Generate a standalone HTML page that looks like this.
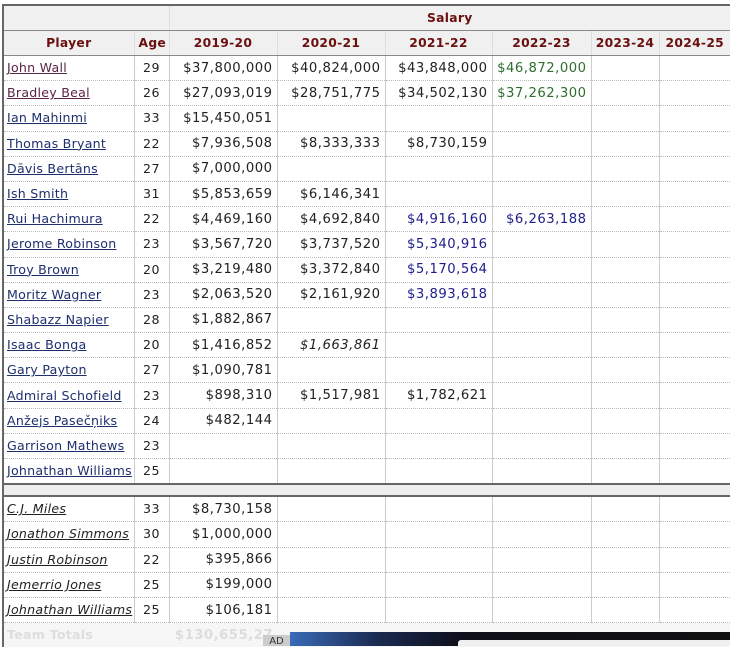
<!DOCTYPE html><html><head><style>
body{margin:0;width:730px;height:646px;overflow:hidden;background:#fff;font-family:"DejaVu Sans",Verdana,sans-serif;font-size:12.3px;color:#222;position:relative}
table{position:absolute;left:2px;top:4px;border-collapse:collapse;table-layout:fixed;width:727px;border-top:2px solid #666;border-left:2px solid #666}
td,th{height:23.2px;padding:1px 4px 0 4px;white-space:nowrap;border-left:1px solid #ccc;border-bottom:1px dotted #bbb;text-align:right;font-size:13.2px;letter-spacing:0.5px;line-height:16px}
th{height:24px;padding:0 4px;background:#f0f0f0;color:#6b0f0f;font-weight:bold;text-align:center;border-bottom:1px solid #888;border-left:1px solid #ddd;letter-spacing:0.3px;font-size:12.3px}
td.n{text-align:left;padding:0 0 0 3px;height:24.2px;letter-spacing:0.25px;font-size:12.6px}
td.n a{color:#1e2f6e;text-decoration:underline}
td.v a{color:#5a2446}
td.a{text-align:center;letter-spacing:0.5px;font-size:12.6px;padding:0;height:24.2px}
.g{color:#2e6e2e}.b{color:#1e1e8a}.i{font-style:italic}
tr.sep td{height:10px;background:#eee;border-top:2px solid #666;border-bottom:2px solid #666;padding:0}
tr.dd td.n a{font-style:italic;color:#222}
tr.tot td{color:#ddd;font-weight:bold;border:none;background:#f6f6f6}
</style></head><body>
<table>
<colgroup><col style="width:131px"><col style="width:35px"><col style="width:108px"><col style="width:108px"><col style="width:107px"><col style="width:99px"><col style="width:68px"><col style="width:71px"></colgroup>
<tr><th colspan="2"></th><th colspan="6">Salary</th></tr>
<tr><th>Player</th><th>Age</th><th>2019-20</th><th>2020-21</th><th>2021-22</th><th>2022-23</th><th>2023-24</th><th>2024-25</th></tr>
<tr><td class="n v"><a>John Wall</a></td><td class="a">29</td><td>$37,800,000</td><td>$40,824,000</td><td>$43,848,000</td><td class="g">$46,872,000</td><td></td><td></td></tr>
<tr><td class="n v"><a>Bradley Beal</a></td><td class="a">26</td><td>$27,093,019</td><td>$28,751,775</td><td>$34,502,130</td><td class="g">$37,262,300</td><td></td><td></td></tr>
<tr><td class="n"><a>Ian Mahinmi</a></td><td class="a">33</td><td>$15,450,051</td><td></td><td></td><td></td><td></td><td></td></tr>
<tr><td class="n"><a>Thomas Bryant</a></td><td class="a">22</td><td>$7,936,508</td><td>$8,333,333</td><td>$8,730,159</td><td></td><td></td><td></td></tr>
<tr><td class="n"><a>Dāvis Bertāns</a></td><td class="a">27</td><td>$7,000,000</td><td></td><td></td><td></td><td></td><td></td></tr>
<tr><td class="n"><a>Ish Smith</a></td><td class="a">31</td><td>$5,853,659</td><td>$6,146,341</td><td></td><td></td><td></td><td></td></tr>
<tr><td class="n"><a>Rui Hachimura</a></td><td class="a">22</td><td>$4,469,160</td><td>$4,692,840</td><td class="b">$4,916,160</td><td class="b">$6,263,188</td><td></td><td></td></tr>
<tr><td class="n"><a>Jerome Robinson</a></td><td class="a">23</td><td>$3,567,720</td><td>$3,737,520</td><td class="b">$5,340,916</td><td></td><td></td><td></td></tr>
<tr><td class="n"><a>Troy Brown</a></td><td class="a">20</td><td>$3,219,480</td><td>$3,372,840</td><td class="b">$5,170,564</td><td></td><td></td><td></td></tr>
<tr><td class="n"><a>Moritz Wagner</a></td><td class="a">23</td><td>$2,063,520</td><td>$2,161,920</td><td class="b">$3,893,618</td><td></td><td></td><td></td></tr>
<tr><td class="n"><a>Shabazz Napier</a></td><td class="a">28</td><td>$1,882,867</td><td></td><td></td><td></td><td></td><td></td></tr>
<tr><td class="n"><a>Isaac Bonga</a></td><td class="a">20</td><td>$1,416,852</td><td class="i">$1,663,861</td><td></td><td></td><td></td><td></td></tr>
<tr><td class="n"><a>Gary Payton</a></td><td class="a">27</td><td>$1,090,781</td><td></td><td></td><td></td><td></td><td></td></tr>
<tr><td class="n"><a>Admiral Schofield</a></td><td class="a">23</td><td>$898,310</td><td>$1,517,981</td><td>$1,782,621</td><td></td><td></td><td></td></tr>
<tr><td class="n"><a>Anžejs Pasečņiks</a></td><td class="a">24</td><td>$482,144</td><td></td><td></td><td></td><td></td><td></td></tr>
<tr><td class="n"><a>Garrison Mathews</a></td><td class="a">23</td><td></td><td></td><td></td><td></td><td></td><td></td></tr>
<tr><td class="n"><a>Johnathan Williams</a></td><td class="a">25</td><td></td><td></td><td></td><td></td><td></td><td></td></tr>
<tr class="sep"><td colspan="8"></td></tr>
<tr class="dd"><td class="n"><a>C.J. Miles</a></td><td class="a">33</td><td>$8,730,158</td><td></td><td></td><td></td><td></td><td></td></tr>
<tr class="dd"><td class="n"><a>Jonathon Simmons</a></td><td class="a">30</td><td>$1,000,000</td><td></td><td></td><td></td><td></td><td></td></tr>
<tr class="dd"><td class="n"><a>Justin Robinson</a></td><td class="a">22</td><td>$395,866</td><td></td><td></td><td></td><td></td><td></td></tr>
<tr class="dd"><td class="n"><a>Jemerrio Jones</a></td><td class="a">25</td><td>$199,000</td><td></td><td></td><td></td><td></td><td></td></tr>
<tr class="dd"><td class="n"><a>Johnathan Williams</a></td><td class="a">25</td><td>$106,181</td><td></td><td></td><td></td><td></td><td></td></tr>
<tr class="tot"><td class="n">Team Totals</td><td></td><td>$130,655,27</td><td></td><td></td><td></td><td></td><td></td></tr>
</table>
<div style="position:absolute;left:263px;top:635px;width:27px;height:11px;background:#ccc;font-size:10px;color:#333;text-align:center;line-height:14px">AD</div>
<div style="position:absolute;left:290px;top:632px;width:440px;height:14px;background:linear-gradient(90deg,#3a6ab8 0%,#1a2a50 20%,#0e0e18 40%,#111 100%)"></div>
<div style="position:absolute;left:458px;top:640px;width:272px;height:6px;background:#f0f0f0;border-radius:3px 0 0 0"></div>
</body></html>
